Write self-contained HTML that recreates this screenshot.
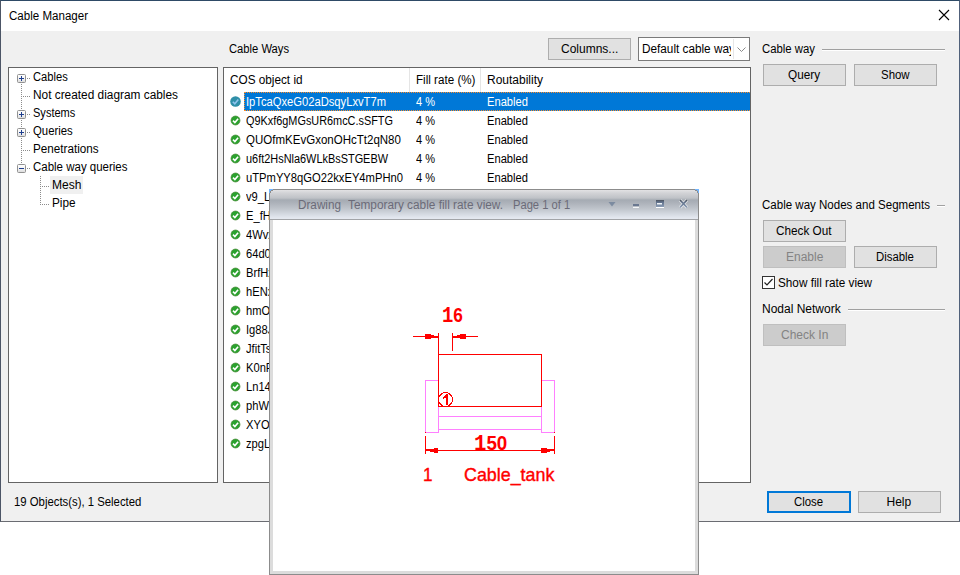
<!DOCTYPE html>
<html><head><meta charset="utf-8">
<style>
*{margin:0;padding:0;box-sizing:border-box}
html,body{width:960px;height:575px;overflow:hidden;background:#fff;font-family:"Liberation Sans",sans-serif;font-size:12px;color:#000}
.a{position:absolute}
.t{position:absolute;white-space:nowrap;line-height:14px;transform-origin:0 0}
.box{position:absolute;background:#fff;border:1px solid #646464}
.btn{position:absolute;background:#e1e1e1;border:1px solid #adadad;width:83px;height:22px}
.btn.dis{background:#cccccc;border-color:#bfbfbf}
.gl{position:absolute;height:2px;background:#a0a0a0;border-bottom:1px solid #fff}
.w{color:#fff}
.g{color:#838383}
</style></head><body>
<!-- main window -->
<div class="a" style="left:0;top:0;width:960px;height:522px;background:#f0f0f0;border:1px solid #6a6c72;border-top-color:#2e4a66;border-left-color:#4c5566;border-right-color:#50607a"></div>
<div class="a" style="left:1px;top:1px;width:958px;height:30px;background:#fff"></div>
<div class="t" style="left:9px;top:9px;transform:scaleX(0.963)">Cable Manager</div>
<svg class="a" style="left:938px;top:9px" width="13" height="13"><path d="M1 1L11 11M11 1L1 11" stroke="#000" stroke-width="1.1"/></svg>

<div class="t" style="left:229px;top:42px;transform:scaleX(0.935)">Cable Ways</div>
<div class="btn" style="left:548px;top:38px"></div>
<div class="t" style="left:561px;top:42px;transform:scaleX(1.0)">Columns...</div>
<div class="box" style="left:638px;top:37px;width:112px;height:24px;border-color:#7a7a7a"></div>
<div class="a" style="left:642px;top:42px;width:89px;height:14px;overflow:hidden"><div class="t" style="left:0;top:0;transform:scaleX(0.98)">Default cable way</div></div>
<div class="a" style="left:733px;top:39px;width:1px;height:20px;background:#e6e6e6"></div>
<svg class="a" style="left:736px;top:46px" width="12" height="8"><path d="M1.5 1.5L5.5 5.5L9.5 1.5" fill="none" stroke="#8a8a8a" stroke-width="1"/></svg>

<!-- tree -->
<div class="box" style="left:8px;top:67px;width:210px;height:416px"></div>
<!--TREE--><svg class="a" style="left:0;top:0" width="220" height="220" shape-rendering="crispEdges">
<defs><linearGradient id="pb" x1="0" y1="0" x2="0" y2="1"><stop offset="0" stop-color="#ffffff"/><stop offset="0.5" stop-color="#f4f4f4"/><stop offset="1" stop-color="#dadada"/></linearGradient></defs>
<g fill="#8c8c8c"><rect x="21" y="84" width="1" height="1"/><rect x="21" y="86" width="1" height="1"/><rect x="21" y="88" width="1" height="1"/><rect x="21" y="90" width="1" height="1"/><rect x="21" y="92" width="1" height="1"/><rect x="21" y="94" width="1" height="1"/><rect x="21" y="96" width="1" height="1"/><rect x="21" y="98" width="1" height="1"/><rect x="21" y="100" width="1" height="1"/><rect x="21" y="102" width="1" height="1"/><rect x="21" y="104" width="1" height="1"/><rect x="21" y="106" width="1" height="1"/><rect x="21" y="108" width="1" height="1"/><rect x="21" y="110" width="1" height="1"/><rect x="21" y="112" width="1" height="1"/><rect x="21" y="114" width="1" height="1"/><rect x="21" y="116" width="1" height="1"/><rect x="21" y="118" width="1" height="1"/><rect x="21" y="120" width="1" height="1"/><rect x="21" y="122" width="1" height="1"/><rect x="21" y="124" width="1" height="1"/><rect x="21" y="126" width="1" height="1"/><rect x="21" y="128" width="1" height="1"/><rect x="21" y="130" width="1" height="1"/><rect x="21" y="132" width="1" height="1"/><rect x="21" y="134" width="1" height="1"/><rect x="21" y="136" width="1" height="1"/><rect x="21" y="138" width="1" height="1"/><rect x="21" y="140" width="1" height="1"/><rect x="21" y="142" width="1" height="1"/><rect x="21" y="144" width="1" height="1"/><rect x="21" y="146" width="1" height="1"/><rect x="21" y="148" width="1" height="1"/><rect x="21" y="150" width="1" height="1"/><rect x="21" y="152" width="1" height="1"/><rect x="21" y="154" width="1" height="1"/><rect x="21" y="156" width="1" height="1"/><rect x="21" y="158" width="1" height="1"/><rect x="21" y="160" width="1" height="1"/><rect x="21" y="162" width="1" height="1"/><rect x="40" y="176" width="1" height="1"/><rect x="40" y="178" width="1" height="1"/><rect x="40" y="180" width="1" height="1"/><rect x="40" y="182" width="1" height="1"/><rect x="40" y="184" width="1" height="1"/><rect x="40" y="186" width="1" height="1"/><rect x="40" y="188" width="1" height="1"/><rect x="40" y="190" width="1" height="1"/><rect x="40" y="192" width="1" height="1"/><rect x="40" y="194" width="1" height="1"/><rect x="40" y="196" width="1" height="1"/><rect x="40" y="198" width="1" height="1"/><rect x="40" y="200" width="1" height="1"/><rect x="40" y="202" width="1" height="1"/><rect x="40" y="204" width="1" height="1"/><rect x="27" y="78" width="1" height="1"/><rect x="29" y="78" width="1" height="1"/><rect x="23" y="96" width="1" height="1"/><rect x="25" y="96" width="1" height="1"/><rect x="27" y="96" width="1" height="1"/><rect x="29" y="96" width="1" height="1"/><rect x="27" y="114" width="1" height="1"/><rect x="29" y="114" width="1" height="1"/><rect x="27" y="132" width="1" height="1"/><rect x="29" y="132" width="1" height="1"/><rect x="23" y="150" width="1" height="1"/><rect x="25" y="150" width="1" height="1"/><rect x="27" y="150" width="1" height="1"/><rect x="29" y="150" width="1" height="1"/><rect x="27" y="168" width="1" height="1"/><rect x="29" y="168" width="1" height="1"/><rect x="42" y="186" width="1" height="1"/><rect x="44" y="186" width="1" height="1"/><rect x="46" y="186" width="1" height="1"/><rect x="48" y="186" width="1" height="1"/><rect x="42" y="204" width="1" height="1"/><rect x="44" y="204" width="1" height="1"/><rect x="46" y="204" width="1" height="1"/><rect x="48" y="204" width="1" height="1"/></g><rect x="17.5" y="74.5" width="8" height="8" rx="1" fill="url(#pb)" stroke="#919191" stroke-width="1" shape-rendering="auto"/><rect x="19" y="78" width="5" height="1" fill="#1f3f8f"/><rect x="21" y="76" width="1" height="5" fill="#1f3f8f"/><rect x="17.5" y="110.5" width="8" height="8" rx="1" fill="url(#pb)" stroke="#919191" stroke-width="1" shape-rendering="auto"/><rect x="19" y="114" width="5" height="1" fill="#1f3f8f"/><rect x="21" y="112" width="1" height="5" fill="#1f3f8f"/><rect x="17.5" y="128.5" width="8" height="8" rx="1" fill="url(#pb)" stroke="#919191" stroke-width="1" shape-rendering="auto"/><rect x="19" y="132" width="5" height="1" fill="#1f3f8f"/><rect x="21" y="130" width="1" height="5" fill="#1f3f8f"/><rect x="17.5" y="164.5" width="8" height="8" rx="1" fill="url(#pb)" stroke="#919191" stroke-width="1" shape-rendering="auto"/><rect x="19" y="168" width="5" height="1" fill="#1f3f8f"/></svg><!--/TREE-->

<div class="t" style="left:33px;top:70px;transform:scaleX(0.93)">Cables</div>
<div class="t" style="left:33px;top:88px;transform:scaleX(0.988)">Not created diagram cables</div>
<div class="t" style="left:33px;top:106px;transform:scaleX(0.92)">Systems</div>
<div class="t" style="left:33px;top:124px;transform:scaleX(0.945)">Queries</div>
<div class="t" style="left:33px;top:142px;transform:scaleX(0.975)">Penetrations</div>
<div class="t" style="left:33px;top:160px;transform:scaleX(0.957)">Cable way queries</div>
<div class="a" style="left:50px;top:176px;width:33px;height:18px;background:#f0f0f0"></div>
<div class="t" style="left:52px;top:178px;transform:scaleX(1.0)">Mesh</div>
<div class="t" style="left:52px;top:196px;transform:scaleX(0.98)">Pipe</div>

<!-- list -->
<div class="box" style="left:223px;top:67px;width:528px;height:416px"></div>
<div class="a" style="left:409px;top:68px;width:1px;height:24px;background:#e5e5e5"></div>
<div class="a" style="left:480px;top:68px;width:1px;height:24px;background:#e5e5e5"></div>
<div class="t" style="left:230px;top:73px;transform:scaleX(0.98)">COS object id</div>
<div class="t" style="left:415.5px;top:73px;transform:scaleX(0.97)">Fill rate (%)</div>
<div class="t" style="left:487px;top:73px">Routability</div>
<div class="a" style="left:244px;top:92px;width:506px;height:19px;background:#0078d7;border:1px dotted #fb8c2a;border-right:none"></div>
<!--ROWS--><svg class="a" style="left:229px;top:95px" width="14" height="14"><circle cx="6.5" cy="6.5" r="5.3" fill="#2f8fa8"/><path d="M3.8 6.8L5.8 8.8L9.3 4.6" fill="none" stroke="#8fc3ef" stroke-width="1.6"/></svg>
<div class="t w" style="left:246px;top:95px;transform:scaleX(0.933)">IpTcaQxeG02aDsqyLxvT7m</div>
<div class="t w" style="left:416px;top:95px;transform:scaleX(0.92)">4 %</div>
<div class="t w" style="left:487px;top:95px;transform:scaleX(0.93)">Enabled</div>
<svg class="a" style="left:229px;top:114px" width="14" height="14"><circle cx="6.5" cy="6.5" r="4.5" fill="#2aa22e" stroke="#4f8a3c" stroke-width="0.7"/><path d="M4 6.6L5.9 8.5L9.1 4.8" fill="none" stroke="#fff" stroke-width="1.6"/></svg>
<div class="t" style="left:246px;top:114px;transform:scaleX(0.907)">Q9Kxf6gMGsUR6mcC.sSFTG</div>
<div class="t" style="left:416px;top:114px;transform:scaleX(0.92)">4 %</div>
<div class="t" style="left:487px;top:114px;transform:scaleX(0.93)">Enabled</div>
<svg class="a" style="left:229px;top:133px" width="14" height="14"><circle cx="6.5" cy="6.5" r="4.5" fill="#2aa22e" stroke="#4f8a3c" stroke-width="0.7"/><path d="M4 6.6L5.9 8.5L9.1 4.8" fill="none" stroke="#fff" stroke-width="1.6"/></svg>
<div class="t" style="left:246px;top:133px;transform:scaleX(0.96)">QUOfmKEvGxonOHcTt2qN80</div>
<div class="t" style="left:416px;top:133px;transform:scaleX(0.92)">4 %</div>
<div class="t" style="left:487px;top:133px;transform:scaleX(0.93)">Enabled</div>
<svg class="a" style="left:229px;top:152px" width="14" height="14"><circle cx="6.5" cy="6.5" r="4.5" fill="#2aa22e" stroke="#4f8a3c" stroke-width="0.7"/><path d="M4 6.6L5.9 8.5L9.1 4.8" fill="none" stroke="#fff" stroke-width="1.6"/></svg>
<div class="t" style="left:246px;top:152px;transform:scaleX(0.91)">u6ft2HsNla6WLkBsSTGEBW</div>
<div class="t" style="left:416px;top:152px;transform:scaleX(0.92)">4 %</div>
<div class="t" style="left:487px;top:152px;transform:scaleX(0.93)">Enabled</div>
<svg class="a" style="left:229px;top:171px" width="14" height="14"><circle cx="6.5" cy="6.5" r="4.5" fill="#2aa22e" stroke="#4f8a3c" stroke-width="0.7"/><path d="M4 6.6L5.9 8.5L9.1 4.8" fill="none" stroke="#fff" stroke-width="1.6"/></svg>
<div class="t" style="left:246px;top:171px;transform:scaleX(0.934)">uTPmYY8qGO22kxEY4mPHn0</div>
<div class="t" style="left:416px;top:171px;transform:scaleX(0.92)">4 %</div>
<div class="t" style="left:487px;top:171px;transform:scaleX(0.93)">Enabled</div>
<svg class="a" style="left:229px;top:190px" width="14" height="14"><circle cx="6.5" cy="6.5" r="4.5" fill="#2aa22e" stroke="#4f8a3c" stroke-width="0.7"/><path d="M4 6.6L5.9 8.5L9.1 4.8" fill="none" stroke="#fff" stroke-width="1.6"/></svg>
<div class="t" style="left:246px;top:190px;transform:scaleX(0.93)">v9_LxQ</div>
<div class="t" style="left:416px;top:190px;transform:scaleX(0.92)">4 %</div>
<div class="t" style="left:487px;top:190px;transform:scaleX(0.93)">Enabled</div>
<svg class="a" style="left:229px;top:209px" width="14" height="14"><circle cx="6.5" cy="6.5" r="4.5" fill="#2aa22e" stroke="#4f8a3c" stroke-width="0.7"/><path d="M4 6.6L5.9 8.5L9.1 4.8" fill="none" stroke="#fff" stroke-width="1.6"/></svg>
<div class="t" style="left:246px;top:209px;transform:scaleX(0.93)">E_fHxQ</div>
<svg class="a" style="left:229px;top:228px" width="14" height="14"><circle cx="6.5" cy="6.5" r="4.5" fill="#2aa22e" stroke="#4f8a3c" stroke-width="0.7"/><path d="M4 6.6L5.9 8.5L9.1 4.8" fill="none" stroke="#fff" stroke-width="1.6"/></svg>
<div class="t" style="left:246px;top:228px;transform:scaleX(0.93)">4WvxQ</div>
<svg class="a" style="left:229px;top:247px" width="14" height="14"><circle cx="6.5" cy="6.5" r="4.5" fill="#2aa22e" stroke="#4f8a3c" stroke-width="0.7"/><path d="M4 6.6L5.9 8.5L9.1 4.8" fill="none" stroke="#fff" stroke-width="1.6"/></svg>
<div class="t" style="left:246px;top:247px;transform:scaleX(0.93)">64d0xQ</div>
<svg class="a" style="left:229px;top:266px" width="14" height="14"><circle cx="6.5" cy="6.5" r="4.5" fill="#2aa22e" stroke="#4f8a3c" stroke-width="0.7"/><path d="M4 6.6L5.9 8.5L9.1 4.8" fill="none" stroke="#fff" stroke-width="1.6"/></svg>
<div class="t" style="left:246px;top:266px;transform:scaleX(0.93)">BrfHxQ</div>
<svg class="a" style="left:229px;top:285px" width="14" height="14"><circle cx="6.5" cy="6.5" r="4.5" fill="#2aa22e" stroke="#4f8a3c" stroke-width="0.7"/><path d="M4 6.6L5.9 8.5L9.1 4.8" fill="none" stroke="#fff" stroke-width="1.6"/></svg>
<div class="t" style="left:246px;top:285px;transform:scaleX(0.93)">hENxQ</div>
<svg class="a" style="left:229px;top:304px" width="14" height="14"><circle cx="6.5" cy="6.5" r="4.5" fill="#2aa22e" stroke="#4f8a3c" stroke-width="0.7"/><path d="M4 6.6L5.9 8.5L9.1 4.8" fill="none" stroke="#fff" stroke-width="1.6"/></svg>
<div class="t" style="left:246px;top:304px;transform:scaleX(0.93)">hmOxQ</div>
<svg class="a" style="left:229px;top:323px" width="14" height="14"><circle cx="6.5" cy="6.5" r="4.5" fill="#2aa22e" stroke="#4f8a3c" stroke-width="0.7"/><path d="M4 6.6L5.9 8.5L9.1 4.8" fill="none" stroke="#fff" stroke-width="1.6"/></svg>
<div class="t" style="left:246px;top:323px;transform:scaleX(0.93)">Ig88JxQ</div>
<svg class="a" style="left:229px;top:342px" width="14" height="14"><circle cx="6.5" cy="6.5" r="4.5" fill="#2aa22e" stroke="#4f8a3c" stroke-width="0.7"/><path d="M4 6.6L5.9 8.5L9.1 4.8" fill="none" stroke="#fff" stroke-width="1.6"/></svg>
<div class="t" style="left:246px;top:342px;transform:scaleX(0.93)">JfitTsx</div>
<svg class="a" style="left:229px;top:361px" width="14" height="14"><circle cx="6.5" cy="6.5" r="4.5" fill="#2aa22e" stroke="#4f8a3c" stroke-width="0.7"/><path d="M4 6.6L5.9 8.5L9.1 4.8" fill="none" stroke="#fff" stroke-width="1.6"/></svg>
<div class="t" style="left:246px;top:361px;transform:scaleX(0.93)">K0nPxQ</div>
<svg class="a" style="left:229px;top:380px" width="14" height="14"><circle cx="6.5" cy="6.5" r="4.5" fill="#2aa22e" stroke="#4f8a3c" stroke-width="0.7"/><path d="M4 6.6L5.9 8.5L9.1 4.8" fill="none" stroke="#fff" stroke-width="1.6"/></svg>
<div class="t" style="left:246px;top:380px;transform:scaleX(0.93)">Ln14xQ</div>
<svg class="a" style="left:229px;top:399px" width="14" height="14"><circle cx="6.5" cy="6.5" r="4.5" fill="#2aa22e" stroke="#4f8a3c" stroke-width="0.7"/><path d="M4 6.6L5.9 8.5L9.1 4.8" fill="none" stroke="#fff" stroke-width="1.6"/></svg>
<div class="t" style="left:246px;top:399px;transform:scaleX(0.93)">phWxQ</div>
<svg class="a" style="left:229px;top:418px" width="14" height="14"><circle cx="6.5" cy="6.5" r="4.5" fill="#2aa22e" stroke="#4f8a3c" stroke-width="0.7"/><path d="M4 6.6L5.9 8.5L9.1 4.8" fill="none" stroke="#fff" stroke-width="1.6"/></svg>
<div class="t" style="left:246px;top:418px;transform:scaleX(0.93)">XYOxQ</div>
<svg class="a" style="left:229px;top:437px" width="14" height="14"><circle cx="6.5" cy="6.5" r="4.5" fill="#2aa22e" stroke="#4f8a3c" stroke-width="0.7"/><path d="M4 6.6L5.9 8.5L9.1 4.8" fill="none" stroke="#fff" stroke-width="1.6"/></svg>
<div class="t" style="left:246px;top:437px;transform:scaleX(0.93)">zpgLxQ</div><!--/ROWS-->

<!-- right panel -->
<div class="t" style="left:762px;top:42px;transform:scaleX(0.946)">Cable way</div>
<div class="gl" style="left:822px;top:49px;width:123px"></div>
<div class="btn" style="left:763px;top:64px"></div>
<div class="t" style="left:788px;top:68px;transform:scaleX(0.98)">Query</div>
<div class="btn" style="left:854px;top:64px"></div>
<div class="t" style="left:881px;top:68px;transform:scaleX(0.953)">Show</div>

<div class="t" style="left:762px;top:198px;transform:scaleX(0.961)">Cable way Nodes and Segments</div>
<div class="gl" style="left:937px;top:205px;width:8px"></div>
<div class="btn" style="left:763px;top:220px"></div>
<div class="t" style="left:776px;top:224px;transform:scaleX(0.98)">Check Out</div>
<div class="btn dis" style="left:763px;top:246px"></div>
<div class="t g" style="left:786px;top:250px;transform:scaleX(1.0)">Enable</div>
<div class="btn" style="left:854px;top:246px"></div>
<div class="t" style="left:876px;top:250px;transform:scaleX(0.947)">Disable</div>
<div class="a" style="left:762px;top:276px;width:13px;height:13px;background:#fff;border:1px solid #333"></div>
<svg class="a" style="left:762px;top:276px" width="13" height="13"><path d="M2.5 6.5L5 9L10.5 3" fill="none" stroke="#222" stroke-width="1.2"/></svg>
<div class="t" style="left:778px;top:276px;transform:scaleX(0.979)">Show fill rate view</div>
<div class="t" style="left:762px;top:302px">Nodal Network</div>
<div class="gl" style="left:848px;top:309px;width:97px"></div>
<div class="btn dis" style="left:763px;top:324px"></div>
<div class="t g" style="left:781px;top:328px;transform:scaleX(1.0)">Check In</div>

<div class="t" style="left:14px;top:495px;transform:scaleX(0.945)">19 Objects(s), 1 Selected</div>
<div class="btn" style="left:767px;top:491px;width:84px;border:2px solid #0078d7"></div>
<div class="t" style="left:794px;top:495px;transform:scaleX(0.95)">Close</div>
<div class="btn" style="left:858px;top:491px"></div>
<div class="t" style="left:886.5px;top:495px;transform:scaleX(1.0)">Help</div>

<!-- drawing window -->
<!--DW--><div class="a" style="left:269px;top:189px;width:430px;height:386px;background:#dcdcdc;border:1px solid #8c8c8c"></div>
<div class="a" style="left:270px;top:190px;width:428px;height:29px;background:linear-gradient(to bottom,#e2e2e4 0px,#d2d3d6 3px,#bfc2c7 8px,#a5abb3 10px,#adb2ba 13px,#c0c5cc 19px,#d4d9e1 24px,#e4e8f0 28px)"></div>
<div class="a" style="left:270px;top:219px;width:428px;height:1px;background:#a2a4a8"></div>
<svg class="a" style="left:269px;top:189px" width="430" height="6" shape-rendering="crispEdges">
<g fill="#73b6ff"><rect x="0" y="0" width="4" height="1"/><rect x="0" y="1" width="2" height="1"/><rect x="0" y="2" width="1" height="2"/>
<rect x="426" y="0" width="4" height="1"/><rect x="428" y="1" width="2" height="1"/><rect x="429" y="2" width="1" height="2"/></g>
<g fill="#8c8c8c"><rect x="2" y="1" width="2" height="1"/><rect x="1" y="2" width="1" height="2"/>
<rect x="426" y="1" width="2" height="1"/><rect x="428" y="2" width="1" height="2"/></g>
</svg>

<div class="a" style="left:273px;top:220px;width:422px;height:351px;background:#fff"></div>
<div class="t" style="left:298px;top:198px;color:#6b6b78;transform:scaleX(0.977)">Drawing</div>
<div class="t" style="left:348px;top:198px;color:#6b6b78;transform:scaleX(0.985)">Temporary cable fill rate view.</div>
<div class="t" style="left:513px;top:198px;color:#6b6b78;transform:scaleX(0.93)">Page 1 of 1</div>
<svg class="a" style="left:600px;top:195px" width="95" height="20">
 <defs><linearGradient id="ig" x1="0" y1="0" x2="0" y2="1"><stop offset="0" stop-color="#4e545e"/><stop offset="0.3" stop-color="#5f708a"/><stop offset="1" stop-color="#8c9db5"/></linearGradient></defs>
 <path d="M8.5 7H15.5L12 11.5Z" fill="#7c8ba0"/>
 <rect x="33" y="9" width="6" height="2" fill="#6a7890"/><rect x="33" y="12" width="6" height="1" fill="#f4f6f8"/>
 <rect x="56" y="5" width="8" height="7" fill="url(#ig)"/><rect x="57" y="8" width="5" height="1.5" fill="#f0f4f8"/><rect x="56" y="12" width="8" height="1" fill="#fff"/>
 <path d="M80 5L87 12.5M87 5L80 12.5" stroke="#ffffff" stroke-opacity="0.7" stroke-width="3.2"/>
 <path d="M80 5L87 12.5M87 5L80 12.5" stroke="url(#ig)" stroke-width="1.8"/>
</svg>
<svg class="a" style="left:0;top:0" width="960" height="575" shape-rendering="crispEdges">
 <g fill="none" stroke="#ff80ff" stroke-width="1">
  <rect x="425.5" y="380.5" width="13" height="52"/>
  <rect x="541.5" y="380.5" width="13" height="52"/>
  <path d="M438 416.5H541M438 429.5H541"/>
 </g>
 <g fill="none" stroke="#ff0000" stroke-width="1">
  <rect x="438.5" y="354.5" width="103" height="52"/>
  <path d="M413 336.5H438M452 336.5H478M438.5 333V354M452.5 333V351"/>
  <path d="M425.5 436V454M554.5 436V454M425 450.5H554"/>
 </g>
 <g fill="#ff0000">
  <rect x="425" y="334" width="6" height="5"/><rect x="431" y="335" width="3" height="3"/><rect x="434" y="336" width="4" height="2"/>
  <rect x="460" y="334" width="6" height="5"/><rect x="457" y="335" width="3" height="3"/><rect x="453" y="336" width="4" height="2"/>
  <rect x="434" y="448" width="4" height="5"/><rect x="430" y="449" width="4" height="3"/><rect x="426" y="449" width="4" height="2"/>
  <rect x="541" y="448" width="6" height="5"/><rect x="547" y="449" width="3" height="3"/><rect x="550" y="449" width="4" height="2"/>
  <rect x="425" y="432" width="1" height="1"/><rect x="554" y="432" width="1" height="1"/>
 </g>
 <circle cx="445.5" cy="399.5" r="7" fill="none" stroke="#ff0000" stroke-width="1.1"/>
</svg>
<div class="a" style="left:442px;top:303px;font:bold 20px 'Liberation Sans';line-height:24px;color:#f00;transform:scaleX(0.86);transform-origin:0 0"><span style="font-family:'Liberation Mono';font-size:22px">1</span>6</div>
<div class="a" style="left:474px;top:431px;font:bold 20px 'Liberation Sans';line-height:24px;color:#f00;transform:scaleX(0.94);transform-origin:0 0"><span style="font-family:'Liberation Mono';font-size:22px">1</span>50</div>
<svg class="a" style="left:0;top:0" width="960" height="575" shape-rendering="crispEdges"><g fill="#f00"><rect x="446" y="394" width="2" height="11"/><rect x="445" y="395" width="1" height="3"/><rect x="444" y="396" width="1" height="2"/><rect x="443" y="397" width="1" height="2"/></g></svg>
<div class="a" style="left:423px;top:464px;font:19px 'Liberation Sans';line-height:22px;color:#f00;transform:scaleX(0.9);transform-origin:0 0;-webkit-text-stroke:0.4px #f00">1</div>
<div class="a" style="left:464px;top:464px;font:19px 'Liberation Sans';line-height:22px;color:#f00;transform:scaleX(0.94);transform-origin:0 0;-webkit-text-stroke:0.4px #f00">Cable_tank</div>
<!--/DW-->
</body></html>
